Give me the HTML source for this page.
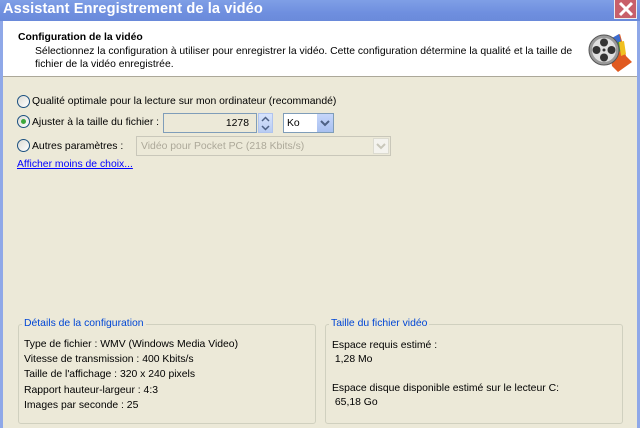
<!DOCTYPE html>
<html><head><meta charset="utf-8"><style>
*{margin:0;padding:0;box-sizing:border-box}
body{width:640px;height:428px;overflow:hidden;background:#ECE9D8;font-family:"Liberation Sans",sans-serif;font-size:10.4px;color:#000;position:relative}
.tb{position:absolute;left:0;top:0;width:640px;height:21px;background:linear-gradient(#7F9FE6,#6F8FDF 60%,#6A8ADA);}
.tb span{position:absolute;left:3px;top:1px;color:#fff;font-weight:bold;font-size:14.6px;letter-spacing:0.1px}
.close{position:absolute;left:614px;top:0;width:23px;height:19px;background:#C8606A;border:1px solid #eee;border-top:none}
.lb{position:absolute;left:0;top:21px;width:3px;height:407px;background:#8FA8E8}
.rb{position:absolute;left:637px;top:21px;width:3px;height:407px;background:#8FA8E8}
.hd{position:absolute;left:3px;top:21px;width:634px;height:56px;background:#fff;border-bottom:1px solid #ACA899}
.a{position:absolute;white-space:nowrap}
.rad{position:absolute;width:13px;height:13px;border:1px solid #1C5180;border-radius:50%;background:linear-gradient(135deg,#DCDBD5,#fff)}
.rad.on::after{content:"";position:absolute;left:3px;top:3px;width:5px;height:5px;border-radius:50%;background:#3CA83C}
.gb{position:absolute;border:1px solid #D0D0BF;border-radius:3px}
.gl{position:absolute;background:#ECE9D8;color:#0046D5;padding:0 2px}
</style></head><body>
<div class="tb"><span>Assistant Enregistrement de la vidéo</span></div>
<div class="close"><svg width="22" height="18" viewBox="0 0 22 18"><path d="M5 3L17 15M17 3L5 15" stroke="#fff" stroke-width="3"/></svg></div>
<div class="lb"></div><div class="rb"></div>
<div class="hd">
<div class="a" style="left:15px;top:11px;font-weight:bold">Configuration de la vidéo</div>
<div class="a" style="left:32px;top:25px">Sélectionnez la configuration à utiliser pour enregistrer la vidéo. Cette configuration détermine la qualité et la taille de</div>
<div class="a" style="left:32px;top:38px">fichier de la vidéo enregistrée.</div>
<svg style="position:absolute;left:583px;top:5px" width="50" height="50" viewBox="0 0 50 50">
<path d="M22 14 L34 8 L40 30 L46 36 L32 46 L26 40 Z" fill="#E05A20"/><path d="M24 14 L33 9 L37 24 L28 28Z" fill="#3C9A3C"/><path d="M26 12 L33 8 L35 15 L28 18Z" fill="#3C6CD0"/><path d="M33 16 L38 15 L40 28 L35 30Z" fill="#F0C020"/>
<circle cx="18" cy="24" r="15" fill="#9A9A9A" stroke="#555"/><circle cx="18" cy="24" r="12" fill="#E0E0E0"/>
<circle cx="18" cy="16.5" r="4" fill="#333"/><circle cx="18" cy="31.5" r="4" fill="#333"/><circle cx="10.5" cy="24" r="4" fill="#333"/><circle cx="25.5" cy="24" r="4" fill="#333"/><circle cx="18" cy="24" r="1.5" fill="#333"/></svg>
</div>
<div class="rad" style="left:17px;top:95px"></div>
<div class="a" style="left:32px;top:96px">Qualité optimale pour la lecture sur mon ordinateur (recommandé)</div>
<div class="rad on" style="left:17px;top:115px"></div>
<div class="a" style="left:32px;top:117px">Ajuster à la taille du fichier :</div>
<div style="position:absolute;left:163px;top:113px;width:94px;height:20px;border:1px solid #7F9DB9;background:#ECE9D8"><span class="a" style="right:7px;top:4px">1278</span></div>
<div style="position:absolute;left:258px;top:113px;width:15px;height:20px;background:linear-gradient(#D8E4FC,#B8CCF2);border:1px solid #B0C4EE"><svg width="13" height="18"><path d="M3 7L6.5 3.5L10 7M3 12L6.5 15.5L10 12" stroke="#4D6185" stroke-width="1.5" fill="none"/></svg></div>
<div style="position:absolute;left:283px;top:113px;width:51px;height:20px;border:1px solid #7F9DB9;background:#fff"><span class="a" style="left:3px;top:4px">Ko</span><div style="position:absolute;right:0;top:0;width:16px;height:18px;background:linear-gradient(#C6D6FA,#A8C0F0)"><svg width="16" height="18"><path d="M4 7L8 11L12 7" stroke="#4D6185" stroke-width="2" fill="none"/></svg></div></div>
<div class="rad" style="left:17px;top:139px"></div>
<div class="a" style="left:32px;top:141px">Autres paramètres :</div>
<div style="position:absolute;left:136px;top:136px;width:255px;height:20px;border:1px solid #C9C7BA;background:#ECE9D8;color:#ACA899"><span class="a" style="left:4px;top:4px">Vidéo pour Pocket PC (218 Kbits/s)</span><div style="position:absolute;right:1px;top:1px;width:16px;height:16px;border:1px solid #DCDBD0;background:#F4F3EE"><svg width="14" height="14"><path d="M3 5L7 9L11 5" stroke="#C9C7BA" stroke-width="2" fill="none"/></svg></div></div>
<div class="a" style="left:17px;top:159px;color:#0000FF;text-decoration:underline">Afficher moins de choix...</div>
<div class="gb" style="left:18px;top:324px;width:298px;height:100px"></div>
<div class="gl" style="left:22px;top:318px">Détails de la configuration</div>
<div class="a" style="left:24px;top:337px;line-height:15.2px">Type de fichier : WMV (Windows Media Video)<br>Vitesse de transmission : 400 Kbits/s<br>Taille de l'affichage : 320 x 240 pixels<br>Rapport hauteur-largeur : 4:3<br>Images par seconde : 25</div>
<div class="gb" style="left:325px;top:324px;width:298px;height:100px"></div>
<div class="gl" style="left:329px;top:318px">Taille du fichier vidéo</div>
<div class="a" style="left:332px;top:339px;line-height:14px">Espace requis estimé :<br>&nbsp;1,28 Mo</div>
<div class="a" style="left:332px;top:382px;line-height:14px">Espace disque disponible estimé sur le lecteur C:<br>&nbsp;65,18 Go</div>
</body></html>
